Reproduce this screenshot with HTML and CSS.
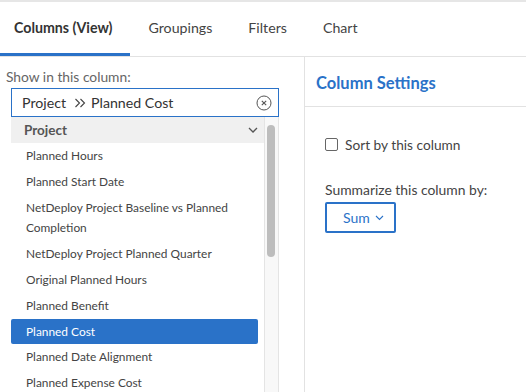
FILE: index.html
```html
<!DOCTYPE html>
<html lang="en">
<head>
    <meta charset="UTF-8">
    <title>Column Settings</title>
    <link rel="stylesheet" href="styles.css">
</head>
<body>
    <div class="panel">
        <nav class="tabs">
            <div class="tab active">Columns (View)</div>
            <div class="tab">Groupings</div>
            <div class="tab">Filters</div>
            <div class="tab">Chart</div>
        </nav>
        <div class="body">
            <section class="picker">
                <label class="picker-label">Show in this column:</label>
                <div class="field">
                    <span class="crumb">Project</span>
                    <svg class="sep" width="12" height="10" viewBox="0 0 12 10">
                        <path d="M1.5 1 L5.5 5 L1.5 9 M6.5 1 L10.5 5 L6.5 9" fill="none" stroke="#444" stroke-width="1.1"/>
                    </svg>
                    <span class="crumb">Planned Cost</span>
                    <svg class="clear" width="16" height="16" viewBox="0 0 16 16">
                        <circle cx="8" cy="8" r="7" fill="none" stroke="#555" stroke-width="1"/>
                        <path d="M5.8 5.8 L10.2 10.2 M10.2 5.8 L5.8 10.2" stroke="#555" stroke-width="1.1"/>
                    </svg>
                </div>
                <div class="list-wrap">
                    <ul class="list">
                        <li class="group">Project
                            <svg class="chev" width="10" height="6" viewBox="0 0 10 6"><path d="M1 1 L5 5 L9 1" fill="none" stroke="#555" stroke-width="1.3"/></svg>
                        </li>
                        <li>Planned Hours</li>
                        <li>Planned Start Date</li>
                        <li>NetDeploy Project Baseline vs Planned Completion</li>
                        <li>NetDeploy Project Planned Quarter</li>
                        <li>Original Planned Hours</li>
                        <li>Planned Benefit</li>
                        <li class="selected">Planned Cost</li>
                        <li>Planned Date Alignment</li>
                        <li>Planned Expense Cost</li>
                    </ul>
                    <div class="scrollbar"><div class="thumb"></div></div>
                </div>
            </section>
            <section class="settings">
                <h2>Column Settings</h2>
                <div class="settings-body">
                    <label class="check"><span class="box"></span>Sort by this column</label>
                    <div class="summarize">Summarize this column by:</div>
                    <button class="sum-btn">Sum
                        <svg width="9" height="6" viewBox="0 0 9 6"><path d="M1 1 L4.5 4.5 L8 1" fill="none" stroke="#2a72c8" stroke-width="1.1"/></svg>
                    </button>
                </div>
            </section>
        </div>
    </div>
</body>
</html>
```

FILE: styles.css
```css
body {
    margin: 0;
    font-family: "Lato", "Liberation Sans", Arial, sans-serif;
    color: #333;
    background: #fff;
}

.panel {
    width: 526px;
    height: 392px;
    overflow: hidden;
    border-top: 2px solid #e6e6e6;
    box-sizing: border-box;
}

.tabs {
    display: flex;
    height: 54px;
    border-bottom: 1px solid #e2e2e2;
}

.tab {
    padding: 0 18px;
    line-height: 52px;
    font-size: 14.2px;
    color: #444;
    border-bottom: 3px solid transparent;
}

.tab:first-child {
    padding-left: 14px;
}

.tab.active {
    font-weight: bold;
    color: #333;
    border-bottom-color: #2a72c8;
}

.body {
    display: flex;
    height: 335px;
}

.picker {
    width: 305px;
    border-right: 1px solid #e2e2e2;
    padding: 12px 0 0 6px;
    box-sizing: border-box;
}

.picker-label {
    display: block;
    font-size: 13.8px;
    color: #666;
    line-height: 16px;
}

.field {
    display: flex;
    align-items: center;
    margin: 3px 0 0 5px;
    width: 268px;
    height: 29px;
    border: 1px solid #2a72c8;
    box-sizing: border-box;
    padding: 0 6px 0 10px;
    font-size: 14.2px;
    color: #333;
}

.sep {
    margin: 0 5px 0 8px;
}

.clear {
    margin-left: auto;
}

.list-wrap {
    display: flex;
    margin-left: 5px;
    width: 268px;
}

.list {
    list-style: none;
    margin: 0;
    padding: 0;
    width: 247px;
}

.list li {
    font-size: 11.9px;
    color: #444;
    line-height: 20px;
    padding: 3px 15px;
}

.list li.group {
    display: flex;
    align-items: center;
    justify-content: space-between;
    background: #f0f0f0;
    font-size: 13.5px;
    font-weight: bold;
    color: #555;
    padding: 3px 6px 3px 13px;
    margin-right: -6px;
}

.list li.selected {
    background: #2a72c8;
    color: #fff;
    border-radius: 2px;
    padding: 3px 15px 2px;
}

.scrollbar {
    width: 13px;
    margin-left: 6px;
    background: #f8f8f8;
    border-left: 1px solid #e4e4e4;
    border-right: 1px solid #e4e4e4;
    height: 300px;
}

.thumb {
    width: 8px;
    height: 132px;
    margin: 8px 0 0 2px;
    background: #bdbdbd;
    border-radius: 4px;
}

.settings {
    flex: 1;
}

.settings h2 {
    margin: 0;
    height: 49px;
    line-height: 52px;
    padding-left: 11px;
    font-size: 16.5px;
    color: #2a72c8;
    border-bottom: 1px solid #e2e2e2;
}

.settings-body {
    padding: 29px 0 0 20px;
}

.check {
    display: flex;
    align-items: center;
    font-size: 13.7px;
    color: #444;
}

.box {
    width: 11px;
    height: 11px;
    border: 1px solid #666;
    border-radius: 2px;
    margin-right: 7px;
}

.summarize {
    margin-top: 28px;
    font-size: 13.9px;
    color: #444;
}

.sum-btn {
    display: flex;
    align-items: center;
    gap: 5px;
    margin-top: 4px;
    width: 71px;
    height: 31px;
    padding: 0 0 0 16px;
    border: 2px solid #2a72c8;
    border-radius: 2px;
    background: #fff;
    color: #2a72c8;
    font-family: inherit;
    font-size: 14px;
}
```
